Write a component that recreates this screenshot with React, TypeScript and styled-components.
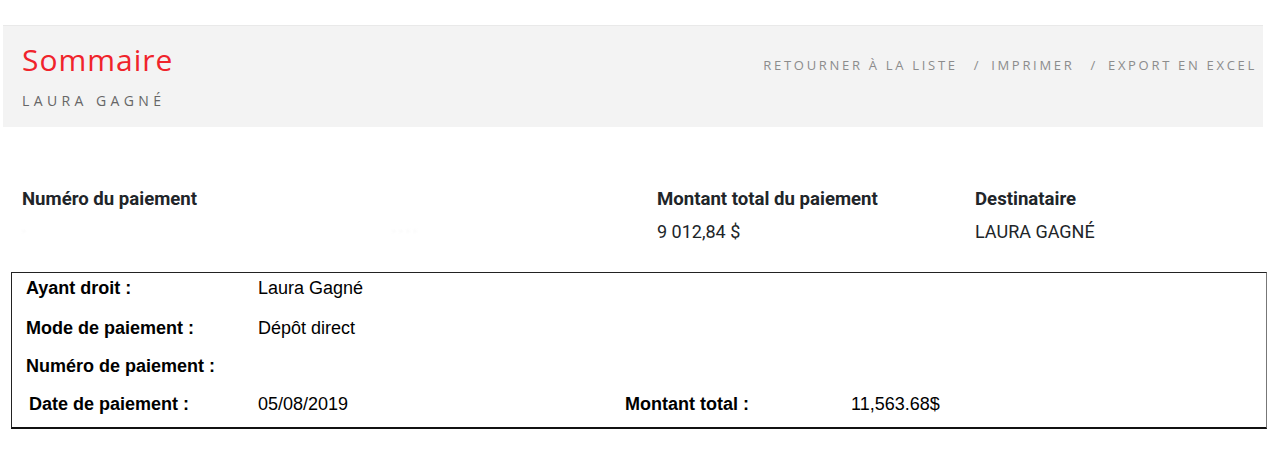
import React, { FC } from 'react';
import styled, { createGlobalStyle } from 'styled-components';

const GlobalStyle = createGlobalStyle`
    body {
        margin: 0;
        background: #fff;
    }
`;

interface DetailRow {
    label: string;
    value: string;
    extraLabel?: string;
    extraValue?: string;
    indent?: number;
    gap: number;
}

const ROWS: Array<DetailRow> = [
    { label: 'Ayant droit :', value: 'Laura Gagné', gap: 5 },
    { label: 'Mode de paiement :', value: 'Dépôt direct', gap: 20 },
    { label: 'Numéro de paiement :', value: '', gap: 18 },
    { label: 'Date de paiement :', value: '05/08/2019', extraLabel: 'Montant total :', extraValue: '11,563.68$', indent: 3, gap: 18 },
];

const App: FC = () => {
    return (
        <Page>
            <GlobalStyle />
            <Header>
                <TitleBlock>
                    <Title>Sommaire</Title>
                    <SubTitle>LAURA GAGNÉ</SubTitle>
                </TitleBlock>
                <Actions>
                    <ActionLink>RETOURNER À LA LISTE</ActionLink>
                    <Separator>/</Separator>
                    <ActionLink>IMPRIMER</ActionLink>
                    <Separator>/</Separator>
                    <ActionLink>EXPORT EN EXCEL</ActionLink>
                </Actions>
            </Header>

            <Summary>
                <SummaryCol>
                    <SummaryLabel>Numéro du paiement</SummaryLabel>
                    <Hidden>
                        <span>·</span>
                        <span>· · · ·</span>
                    </Hidden>
                </SummaryCol>
                <SummaryCol>
                    <SummaryLabel>Montant total du paiement</SummaryLabel>
                    <SummaryValue>9 012,84 $</SummaryValue>
                </SummaryCol>
                <SummaryCol>
                    <SummaryLabel>Destinataire</SummaryLabel>
                    <SummaryValue>LAURA GAGNÉ</SummaryValue>
                </SummaryCol>
            </Summary>

            <DetailBox>
                {ROWS.map((row) => (
                    <Row key={row.label} $gap={row.gap}>
                        <RowLabel $indent={row.indent || 0}>{row.label}</RowLabel>
                        <RowValue>{row.value}</RowValue>
                        {row.extraLabel && <RowLabel $indent={0}>{row.extraLabel}</RowLabel>}
                        {row.extraValue && <RowValue>{row.extraValue}</RowValue>}
                    </Row>
                ))}
            </DetailBox>
        </Page>
    );
};

const Page = styled.div`
    width: 1280px;
    height: 450px;
    padding-top: 25px;
    box-sizing: border-box;
    overflow: hidden;
`;

const Header = styled.div`
    margin-left: 3px;
    width: 1260px;
    height: 102px;
    box-sizing: border-box;
    background: #f3f3f3;
    border-top: 1px solid #e9e9e9;
    display: flex;
    justify-content: space-between;
    align-items: flex-start;
    padding: 0 6px 0 19px;
`;

const TitleBlock = styled.div`
    display: flex;
    flex-direction: column;
    padding-top: 14px;
`;

const Title = styled.h1`
    margin: 0;
    font-family: 'Open Sans', sans-serif;
    font-weight: 400;
    font-size: 30px;
    line-height: 40px;
    color: #f0232b;
    letter-spacing: 1px;
`;

const SubTitle = styled.div`
    margin-top: 13px;
    font-family: 'Open Sans', sans-serif;
    font-size: 14px;
    line-height: 16px;
    letter-spacing: 4.4px;
    color: #666;
`;

const Actions = styled.div`
    display: flex;
    align-items: center;
    padding-top: 31px;
    font-family: 'Open Sans', sans-serif;
    font-size: 13px;
    line-height: 16px;
    color: #8c8c8c;
    letter-spacing: 2.7px;
`;

const ActionLink = styled.span`
    cursor: pointer;
`;

const Separator = styled.span`
    margin: 0 10px 0 16px;
`;

const Summary = styled.div`
    display: grid;
    grid-template-columns: 635px 318px 1fr;
    padding: 60px 0 0 22px;
    height: 145px;
    box-sizing: border-box;
    font-family: 'Roboto', 'Liberation Sans', sans-serif;
`;

const SummaryCol = styled.div`
    display: flex;
    flex-direction: column;
`;

const SummaryLabel = styled.div`
    font-size: 18.6px;
    font-weight: 700;
    line-height: 20px;
    color: #212529;
    margin-top: 2px;
`;

const SummaryValue = styled.div`
    margin-top: 13px;
    font-size: 18px;
    line-height: 20px;
    color: #212529;
`;

const Hidden = styled.div`
    margin-top: 13px;
    display: flex;
    justify-content: space-between;
    width: 395px;
    font-size: 14px;
    line-height: 20px;
    color: #eeeeee;
    filter: blur(1px);
`;

const DetailBox = styled.div`
    margin-left: 11px;
    width: 1256px;
    height: 157px;
    box-sizing: border-box;
    border: 1.5px solid #222;
    border-bottom: 2px solid #111;
    border-right-color: #777;
    padding: 0 0 0 14px;
    font-family: 'Liberation Sans', Arial, sans-serif;
    font-size: 18px;
    color: #000;
`;

const Row = styled.div<{ $gap: number }>`
    display: grid;
    grid-template-columns: 232px 367px 226px 1fr;
    margin-top: ${(p) => p.$gap}px;
    line-height: 20px;
`;

const RowLabel = styled.div<{ $indent: number }>`
    font-weight: 700;
    padding-left: ${(p) => p.$indent}px;
`;

const RowValue = styled.div`
    font-weight: 400;
`;

export default App;
